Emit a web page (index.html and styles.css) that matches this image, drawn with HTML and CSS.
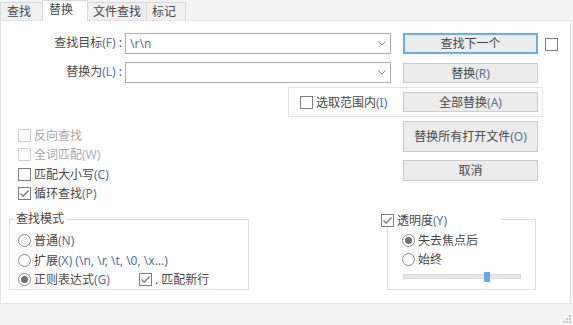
FILE: index.html
```html
<!DOCTYPE html>
<html lang="zh-CN">
<head>
<meta charset="utf-8">
<title>替换</title>
<link rel="stylesheet" href="styles.css">
</head>
<body>
<div class="tabs">
  <div class="tab t1">查找</div>
  <div class="tab t2 active">替换</div>
  <div class="tab t3">文件查找</div>
  <div class="tab t4">标记</div>
</div>
<div class="panel">
  <div class="row r1">
    <div class="lbl">查找目标<span class="mn">(F)</span> :</div>
    <div class="combo">
      <span class="val mn">\r\n</span>
      <svg class="chev" width="8" height="5" viewBox="0 0 8 5"><polyline points="0.5,0.5 4,4 7.5,0.5" fill="none" stroke="#8a8a8a" stroke-width="1"/></svg>
    </div>
    <div class="btn focus">查找下一个</div>
    <span class="cb solo"></span>
  </div>
  <div class="row r2">
    <div class="lbl">替换为<span class="mn">(L)</span> :</div>
    <div class="combo">
      <span class="val"></span>
      <svg class="chev" width="8" height="5" viewBox="0 0 8 5"><polyline points="0.5,0.5 4,4 7.5,0.5" fill="none" stroke="#8a8a8a" stroke-width="1"/></svg>
    </div>
    <div class="btn short">替换<span class="mn">(R)</span></div>
  </div>
  <div class="selbox">
    <span class="cb"></span>
    <span class="txt">选取范围内<span class="mn">(I)</span></span>
    <div class="btn short push">全部替换<span class="mn">(A)</span></div>
  </div>
  <div class="lower">
    <div class="left">
      <div class="checks">
        <div class="check dis h19"><span class="cb"></span><span class="txt">反向查找</span></div>
        <div class="check dis h19"><span class="cb"></span><span class="txt">全词匹配<span class="mn">(W)</span></span></div>
        <div class="check h20"><span class="cb"></span><span class="txt">匹配大小写<span class="mn">(C)</span></span></div>
        <div class="check h19"><span class="cb on"><svg width="11" height="11" viewBox="0 0 11 11"><polyline points="1.5,5.5 4.2,8.2 9.5,2.5" fill="none" stroke="#707070" stroke-width="1.2"/></svg></span><span class="txt">循环查找<span class="mn">(P)</span></span></div>
      </div>
      <div class="group mode">
        <div class="cap">查找模式</div>
        <div class="gbox">
          <div class="check h19"><span class="radio"></span><span class="txt">普通<span class="mn">(N)</span></span></div>
          <div class="check h20"><span class="radio"></span><span class="txt">扩展<span class="mn">(X) (\n, \r, \t, \0, \x...)</span></span></div>
          <div class="check h19">
            <div class="item w121"><span class="radio sel"><span class="dot"></span></span><span class="txt">正则表达式<span class="mn">(G)</span></span></div>
            <span class="cb on"><svg width="11" height="11" viewBox="0 0 11 11"><polyline points="1.5,5.5 4.2,8.2 9.5,2.5" fill="none" stroke="#707070" stroke-width="1.2"/></svg></span><span class="txt">. 匹配新行</span>
          </div>
        </div>
      </div>
    </div>
    <div class="right">
      <div class="btn tall">替换所有打开文件<span class="mn">(O)</span></div>
      <div class="btn cancel">取消</div>
      <div class="group trans">
        <div class="cap tcap"><span class="cb on"><svg width="11" height="11" viewBox="0 0 11 11"><polyline points="1.5,5.5 4.2,8.2 9.5,2.5" fill="none" stroke="#707070" stroke-width="1.2"/></svg></span><span class="txt">透明度<span class="mn">(Y)</span></span></div>
        <div class="gbox tbox">
          <div class="check h19"><span class="radio sel"><span class="dot"></span></span><span class="txt">失去焦点后</span></div>
          <div class="check h19"><span class="radio"></span><span class="txt">始终</span></div>
          <div class="track"><span class="thumb"></span></div>
        </div>
      </div>
    </div>
  </div>
</div>
<svg class="grip" width="9" height="9" viewBox="0 0 9 9">
  <rect x="6" y="0" width="2" height="2" fill="#c9c9c9"/>
  <rect x="3" y="3" width="2" height="2" fill="#c9c9c9"/>
  <rect x="6" y="3" width="2" height="2" fill="#c9c9c9"/>
  <rect x="0" y="6" width="2" height="2" fill="#c9c9c9"/>
  <rect x="3" y="6" width="2" height="2" fill="#c9c9c9"/>
  <rect x="6" y="6" width="2" height="2" fill="#c9c9c9"/>
</svg>
</body>
</html>
```
FILE: styles.css
```css
* { box-sizing: border-box; }
html, body { margin: 0; padding: 0; }
body {
  width: 573px;
  height: 325px;
  overflow: hidden;
  position: relative;
  background: #f3f3f3;
  font-family: "Noto Sans", "Noto Sans CJK SC", sans-serif;
  font-size: 12px;
  color: #474747;
}
.tabs {
  display: flex;
  align-items: flex-end;
  height: 20px;
}
.tab {
  height: 18px;
  border: 1px solid #d9d9d9;
  border-bottom: none;
  background: #f0f0f0;
  line-height: 17px;
  padding-left: 5px;
  white-space: nowrap;
}
.t1 { width: 43px; padding-left: 6px; }
.t2 { width: 46px; margin-left: -1px; padding-left: 6px; }
.t3 { width: 60px; margin-left: -1px; }
.t4 { width: 40px; margin-left: -1px; }
.tab.active {
  height: 21px;
  background: #fff;
  margin-bottom: -1px;
  position: relative;
  z-index: 2;
}
.panel {
  width: 571px;
  height: 284px;
  background: #fff;
  border: 1px solid #e3e3e3;
  padding-top: 12px;
}
.mn { color: #5a6f95; }
.row { display: flex; align-items: flex-start; }
.r2 { margin-top: 8px; }
.lbl {
  width: 121px;
  text-align: right;
  line-height: 20px;
  white-space: nowrap;
}
.combo {
  width: 266px;
  height: 21px;
  margin-left: 3px;
  border: 1px solid #adadad;
  background: #fff;
  display: flex;
  align-items: center;
}
.val { padding-left: 4px; line-height: 17px; }
.chev { margin-left: auto; margin-right: 4px; }
.btn {
  width: 135px;
  height: 21px;
  margin-left: 12px;
  background: #ececec;
  border: 1px solid #cccccc;
  display: flex;
  align-items: center;
  justify-content: center;
  white-space: nowrap;
  line-height: 17px;
}
.btn.focus { border: 2px solid #69aee8; }
.btn.short { height: 20px; margin-top: 1px; }
.cb {
  width: 13px;
  height: 13px;
  flex: none;
  border: 1px solid #7d7d7d;
  background: #fff;
  display: inline-flex;
  align-items: center;
  justify-content: center;
}
.cb.solo { margin-left: 7px; margin-top: 5px; }
.selbox {
  margin-top: 4px;
  margin-left: 287px;
  width: 255px;
  height: 30px;
  border: 1px solid #e3e3e3;
  display: flex;
  align-items: center;
  padding-left: 11px;
}
.txt { margin-left: 3px; white-space: nowrap; line-height: 17px; }
.btn.push { margin-left: auto; margin-right: 4px; margin-top: 0; }
.lower { display: flex; }
.left { width: 380px; flex: none; }
.checks { margin-top: 9px; padding-left: 17px; }
.check { display: flex; align-items: center; }
.h19 { height: 19px; }
.h20 { height: 20px; }
.dis { color: #a8a8a8; }
.dis .cb { border-color: #cfcfcf; }
.dis .mn { color: #a6b2c6; }
.radio {
  width: 13px;
  height: 13px;
  flex: none;
  border: 1px solid #8c8c8c;
  border-radius: 50%;
  background: #fff;
  display: inline-flex;
  align-items: center;
  justify-content: center;
}
.dot {
  width: 7px;
  height: 7px;
  border-radius: 50%;
  background: #6f6f6f;
}
.item { display: flex; align-items: center; }
.w121 { width: 121px; }
.cap {
  position: relative;
  z-index: 1;
  width: fit-content;
  background: #fff;
  line-height: 14px;
  height: 14px;
  padding: 0 2px;
  white-space: nowrap;
}
.gbox {
  border: 1px solid #dcdcdc;
}
.mode { margin-top: 9px; margin-left: 8px; width: 240px; }
.mode .cap { margin-left: 5px; }
.mode .gbox { margin-top: -7px; padding-top: 11px; padding-left: 8px; }
.right { flex: 1; }
.btn.tall { height: 31px; margin-top: 4px; margin-left: 22px; }
.btn.cancel { margin-top: 8px; margin-left: 22px; }
.trans { margin-top: 32px; }
.tcap {
  width: 120px;
  height: 15px;
  line-height: 15px;
  padding: 0;
  display: flex;
  align-items: center;
}
.tbox {
  margin-top: -9px;
  margin-left: 6px;
  width: 149px;
  padding-top: 11px;
  padding-left: 14px;
  padding-bottom: 10px;
}
.track {
  position: relative;
  margin-top: 5px;
  margin-left: 1px;
  width: 118px;
  height: 5px;
  background: #e7e7e7;
  border: 1px solid #dadada;
}
.thumb {
  position: absolute;
  left: 80px;
  top: -3px;
  width: 6px;
  height: 10px;
  background: #62abe8;
}
.grip {
  position: absolute;
  right: 1px;
  bottom: 1px;
}
```
